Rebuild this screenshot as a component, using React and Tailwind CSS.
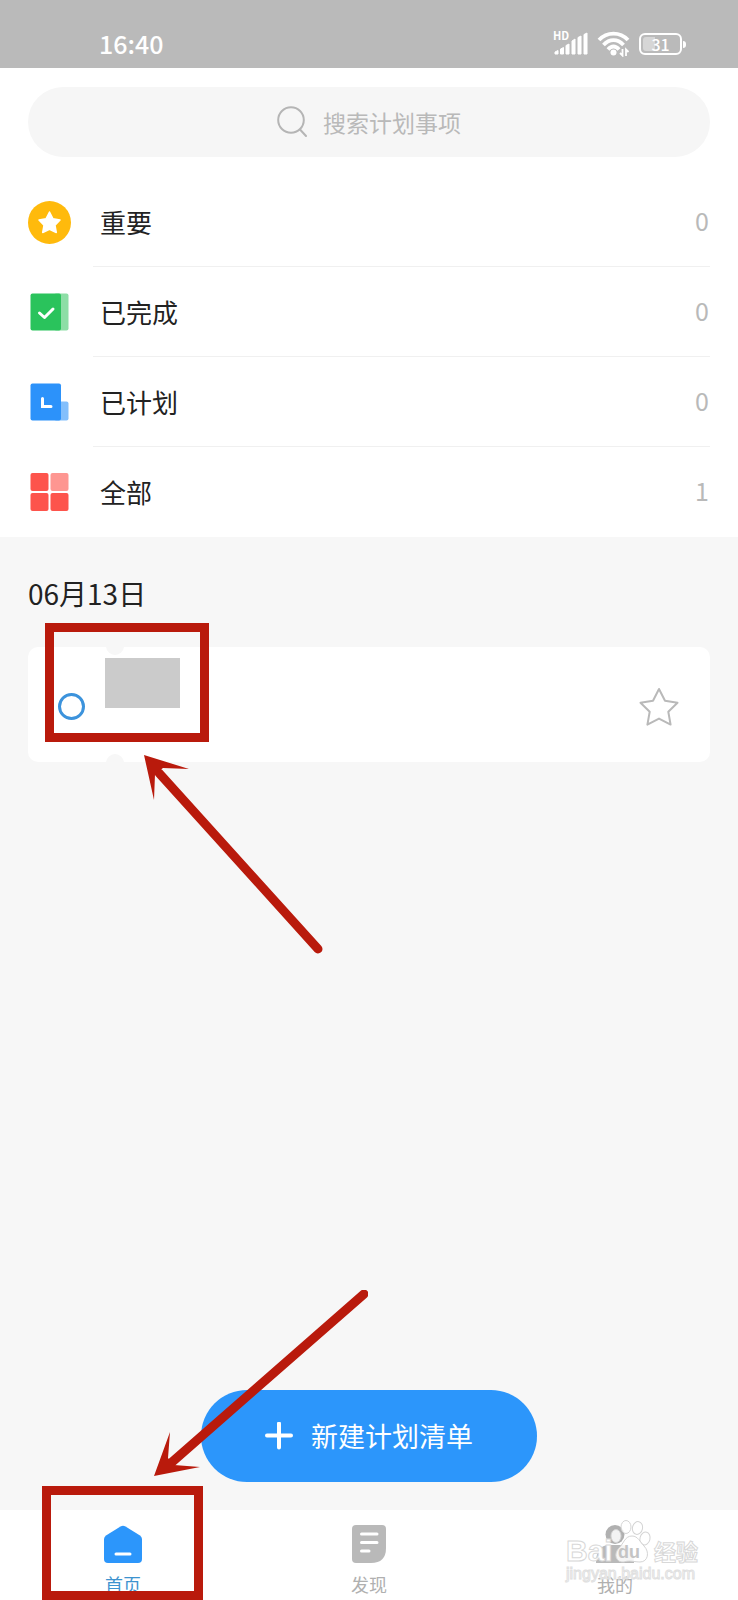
const lists = [
  { name: '重要', count: 0, Icon: ImportantIcon },
  { name: '已完成', count: 0, Icon: DoneIcon },
  { name: '已计划', count: 0, Icon: PlannedIcon },
  { name: '全部', count: 1, Icon: AllIcon },
]

export default function App() {
  return (
    <div className="flex min-h-screen flex-col bg-[#f7f7f7] font-['Noto_Sans_CJK_SC',sans-serif] text-[#222]">
      <StatusBar />

      <header className="bg-white px-7 pt-[19px]">
        <label className="flex h-[70px] items-center justify-center gap-4 rounded-full bg-[#f6f6f6]">
          <SearchIcon />
          <input
            type="text"
            aria-label="搜索计划事项"
            placeholder="搜索计划事项"
            className="w-[138px] bg-transparent text-[23px] leading-[32px] outline-none placeholder:text-[#b9b9b9]"
          />
        </label>
        <ul className="mt-5">
          {lists.map((list) => (
            <ListRow key={list.name} {...list} />
          ))}
        </ul>
      </header>

      <main className="flex flex-1 flex-col px-7 pt-9 pb-7">
        <h2 className="text-[28px] leading-[40px]">06月13日</h2>
        <TaskCard />
        <div className="relative mt-auto flex justify-center">
          <button
            type="button"
            className="flex h-[92px] w-[336px] items-center justify-center gap-4 rounded-full bg-[#2c96fb] text-[27px] text-white"
          >
            <svg width="30" height="28" viewBox="0 0 30 28" fill="none" stroke="currentColor" strokeWidth="4" strokeLinecap="round">
              <path d="M2 13.500H26M14 1.500V25.500" />
            </svg>
            新建计划清单
          </button>
          {/* pointer to the home tab */}
          <svg className="absolute -top-[100px] left-[120px]" width="220" height="190" viewBox="0 0 220 190">
            <path d="M216 4L23 173" stroke="#b91a0c" strokeWidth="9" strokeLinecap="round" />
            <path d="M6 186L22 142L20 168L26 175L52 177Z" fill="#b91a0c" />
          </svg>
        </div>
      </main>

      <TabBar />
    </div>
  )
}

function StatusBar() {
  return (
    <div className="flex h-[68px] items-center justify-between bg-[#bababa] pt-5 pr-[52px] pl-[99px] text-white">
      <span className="text-[25px] font-medium">16:40</span>
      <div className="flex items-center gap-2">
        <div className="relative">
          <span className="absolute -top-1 left-0 text-[11px] leading-[14px] font-bold">HD</span>
          <svg width="36" height="24" viewBox="0 0 36 24" fill="currentColor" stroke="currentColor" strokeLinejoin="round">
            <path d="M2 20L5 18.500V22H2ZM7.500 17L10.500 15.500V22H7.500ZM13 13.500L16 12V22H13ZM19 9L22 7V22H19ZM25 5.500L28 4V22H25ZM31 2.500L34 1V22H31Z" />
          </svg>
        </div>
        <svg width="34" height="26" viewBox="0 0 34 26" fill="none" stroke="currentColor" strokeWidth="3.800">
          <path d="M2 9C10 .5 23 .5 31 9M6.500 14C12.500 7.500 20.500 7.500 26.500 14M11 18.500C14.500 14.500 18.500 14.500 22 18.500" />
          <circle cx="16.500" cy="21.500" r="3" fill="currentColor" stroke="none" />
          <path d="M25.500 18V24.500L23 22M29 25V18.500L31.500 21" strokeWidth="1.800" />
        </svg>
        <div className="flex items-center gap-px">
          <div className="relative flex h-[22px] w-[43px] items-center justify-center rounded-[6px] border-2 border-white">
            <span className="absolute inset-y-[2px] left-[2px] w-3 rounded-l-[3px] bg-[#d6d6d6]" />
            <span className="relative text-[16px] leading-[18px] font-medium">31</span>
          </div>
          <span className="h-[7px] w-[3px] rounded-r-sm bg-white" />
        </div>
      </div>
    </div>
  )
}

function ListRow({ name, count, Icon }) {
  return (
    <li className="group flex items-center gap-[22px]">
      <Icon />
      <a
        href="#list"
        className="flex h-[90px] flex-1 items-center justify-between border-b border-[#f0f0f0] pr-px pb-px pl-[7px] text-[26px] group-last:border-transparent"
      >
        <span>{name}</span>
        <span className="text-[25px] text-[#b9b9b9]">{count}</span>
      </a>
    </li>
  )
}

function TaskCard() {
  return (
    <div className="relative mt-[34px]">
      <div className="relative flex h-[115px] items-center justify-between overflow-hidden rounded-[10px] bg-white px-[30px]">
        <span className="absolute -top-[10px] left-[78px] size-[18px] rounded-full bg-[#f7f7f7]" />
        <span className="absolute -bottom-[10px] left-[78px] size-[18px] rounded-full bg-[#f7f7f7]" />
        <input
          type="checkbox"
          aria-label="完成"
          className="mt-1 size-[27px] appearance-none rounded-full border-3 border-[#3c93dc]"
        />
        <button type="button" aria-label="标为重要" className="pt-1">
          <svg width="42" height="42" viewBox="1 1 42 42" fill="none" stroke="#b9b9b9" strokeWidth="2" strokeLinejoin="round">
            <path d="M22 4L28 15.800L40.500 17.800L31.300 26.800L33.600 39.600L22 33.600L10.400 39.600L12.700 26.800L3.500 17.800L16 15.800Z" />
          </svg>
        </button>
      </div>
      {/* masked task title, with the frame and the pointer on it */}
      <span className="absolute top-[11px] left-[77px] h-[50px] w-[75px] bg-[#cbcbcb]" />
      <span className="absolute -top-6 left-[17px] h-[119px] w-[164px] border-[9px] border-[#b91a0c]" />
      <svg className="absolute top-[104px] left-[112px]" width="190" height="205" viewBox="0 0 190 205">
        <path d="M178 198L19 22" stroke="#b91a0c" strokeWidth="9" strokeLinecap="round" />
        <path d="M4 4L49 18L23 17L15 23L14 49Z" fill="#b91a0c" />
      </svg>
    </div>
  )
}

function TabBar() {
  return (
    <nav className="grid grid-cols-3 bg-white">
      <div className="relative">
        <Tab label="首页" active>
          <path d="M16.500 1.500Q19 0 21.500 1.500L36 10.500Q38 12 38 14V34Q38 38 34 38H4Q0 38 0 34V14Q0 12 2 10.500Z" fill="#2c96fb" />
          <path d="M12 29H26" stroke="#fff" strokeWidth="3" strokeLinecap="round" />
        </Tab>
        <span className="pointer-events-none absolute -top-6 left-[42px] h-[114px] w-[161px] border-[9px] border-[#b91a0c]" />
      </div>
      <Tab label="发现">
        <path d="M6 0H32Q36 0 36 4V23Q36 38 21 38H6Q2 38 2 34V4Q2 0 6 0Z" fill="#b9b9b9" />
        <path d="M11.500 9H27M11.500 17.500H27M11.500 26H19" stroke="#fff" strokeWidth="3" strokeLinecap="round" />
      </Tab>
      <div className="relative">
        <Tab label="我的">
          <circle cx="19" cy="9.500" r="9.500" fill="#b0b0b0" />
          <path d="M0 38Q0 20 13 20H25Q38 20 38 38Z" fill="#b9b9b9" />
        </Tab>
        <Watermark />
      </div>
    </nav>
  )
}

function Tab({ label, active, children }) {
  return (
    <a href="#tab" className={`flex h-[90px] flex-col items-center gap-3 pt-[15px] ${active ? 'text-[#3d93cf]' : 'text-[#b0b0b0]'}`}>
      <svg width="38" height="38" viewBox="0 0 38 38" fill="none">
        {children}
      </svg>
      <span className="text-[18px] leading-[18px]">{label}</span>
    </a>
  )
}

function Watermark() {
  return (
    <div className="pointer-events-none absolute top-2.5 left-[74px] w-[132px] text-white">
      <div className="relative flex h-[46px] items-end justify-between font-bold [-webkit-text-stroke:1px_#d8d8d8]">
        <span className="font-['Liberation_Sans',sans-serif] text-[30px] leading-[30px]">Bai</span>
        <svg className="absolute top-0 left-[42px]" width="50" height="44" viewBox="0 0 50 44" fill="#fff" fillOpacity=".85" stroke="#d4d4d4">
          <ellipse cx="8" cy="16" rx="5" ry="6.500" />
          <ellipse cx="18" cy="7" rx="5" ry="6.500" />
          <ellipse cx="29.500" cy="8" rx="5" ry="6.500" transform="rotate(12 29.500 8)" />
          <ellipse cx="37" cy="18.500" rx="5" ry="6.500" transform="rotate(15 37 18.500)" />
          <path d="M24 16C30 16 32 22 36 26C42 32 40 42 32 42C27 42 21 40 16 42C8 43 5 34 11 28C16 23 17 16 24 16Z" />
        </svg>
        <span className="absolute bottom-1 left-[52px] font-['Liberation_Sans',sans-serif] text-[18px] leading-[20px] text-[#c4c4c4] [-webkit-text-stroke:0]">
          du
        </span>
        <span className="text-[22px] leading-[32px]">经验</span>
      </div>
      <div className="font-['Liberation_Sans',sans-serif] text-[16px] leading-[16px] [-webkit-text-stroke:1px_#e0e0e0]">
        jingyan.baidu.com
      </div>
    </div>
  )
}

function SearchIcon() {
  return (
    <svg width="30" height="32" viewBox="0 0 30 32" fill="none" stroke="#b5b5b5" strokeWidth="2" strokeLinecap="round">
      <circle cx="14" cy="14" r="12.800" />
      <path d="M23 23.500L29 30" />
    </svg>
  )
}

function ImportantIcon() {
  return (
    <svg width="43" height="43" viewBox="0 0 43 43">
      <circle cx="21.500" cy="21.500" r="21.500" fill="#ffba0c" />
      <path
        d="M21.500 11L25 17.800L32 19L27 24.300L28.300 31.500L21.500 28.300L14.700 31.500L16 24.300L11 19L18 17.800Z"
        fill="#fff"
        stroke="#fff"
        strokeWidth="1.500"
        strokeLinejoin="round"
      />
    </svg>
  )
}

function DoneIcon() {
  return (
    <svg width="43" height="43" viewBox="0 0 43 43">
      <rect x="26" y="2.500" width="14.500" height="37" rx="2" fill="#8ddea6" />
      <rect x="2.500" y="2.500" width="30.500" height="37" rx="2" fill="#2ac35c" />
      <path d="M11.500 22L16.500 26.500L25 18" fill="none" stroke="#fff" strokeWidth="3" strokeLinecap="round" strokeLinejoin="round" />
    </svg>
  )
}

function PlannedIcon() {
  return (
    <svg width="43" height="43" viewBox="0 0 43 43">
      <rect x="26" y="20.500" width="14.500" height="19" rx="2" fill="#83bffc" />
      <rect x="2.500" y="2.500" width="30.500" height="37" rx="2" fill="#2c92fa" />
      <path d="M14.500 17.500V25.500H23" fill="none" stroke="#fff" strokeWidth="3" strokeLinecap="round" />
    </svg>
  )
}

function AllIcon() {
  return (
    <svg width="43" height="43" viewBox="0 0 43 43" fill="#fd544c">
      <rect x="2.500" y="2" width="18" height="18" rx="2" />
      <rect x="22.500" y="2" width="18" height="18" rx="2" fill="#fe9691" />
      <rect x="2.500" y="22" width="18" height="18" rx="2" />
      <rect x="22.500" y="22" width="18" height="18" rx="2" />
    </svg>
  )
}
